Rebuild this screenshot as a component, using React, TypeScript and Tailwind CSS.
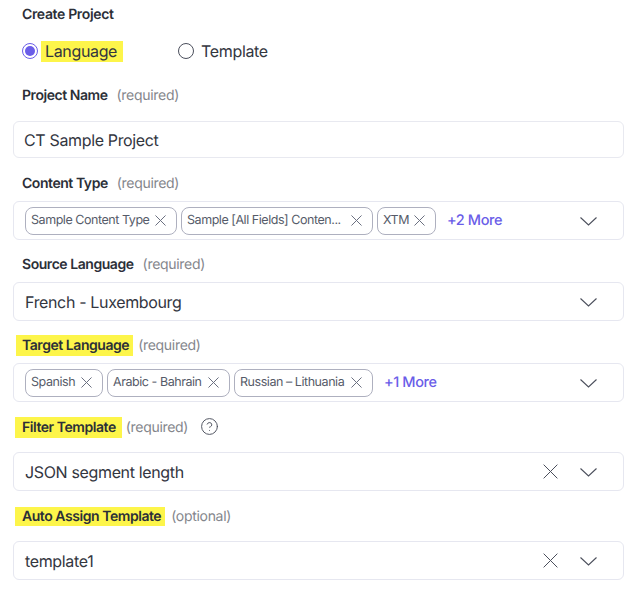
import { CircleHelp } from "lucide-react"

function Label({ name, hint, mark, gap, className }: { name: string; hint: string; mark?: string; gap?: string; className?: string }) {
    return (
        <div className={`flex items-center h-6 pt-[2px] text-[14px] tracking-[-0.45px] ${className || ""}`}>
            <span className={`font-semibold text-[#2b2f38] ${mark || "pl-[9px]"}`}>{name}</span>
            <span className={`text-[#84868c] tracking-[-0.3px] ${gap || "ml-[9px]"}`}>{hint}</span>
        </div>
    )
}

function Cross({ size, className }: { size: number; className: string }) {
    return (
        <svg width={size} height={size} viewBox="0 0 12 12" fill="none" stroke="currentColor" strokeWidth={12 / size} className={className}>
            <path d="M0.5 0.5L11.5 11.5M11.5 0.5L0.5 11.5" />
        </svg>
    )
}

function Chip({ text, width }: { text: string; width: string }) {
    return (
        <div className={`flex items-center justify-between h-7 pl-[5px] pr-[10px] border border-[#aeb0bf] rounded-lg text-[12.5px] tracking-[-0.45px] text-[#565b69] ${width}`}>
            <span className="whitespace-nowrap pt-[1px]">{text}</span>
            <Cross size={11} className="text-[#6b7080] shrink-0" />
        </div>
    )
}

function Chevron() {
    return (
        <svg width="17" height="9" viewBox="0 0 17 9" fill="none" stroke="currentColor" strokeWidth="1.1" className="text-[#4b4f5c] mt-[1px]">
            <path d="M0.5 0.5L8.5 8L16.5 0.5" />
        </svg>
    )
}

function More({ text }: { text: string }) {
    return <span className="ml-[11px] text-[14.5px] font-medium tracking-[-0.4px] text-[#6a5de8]">{text}</span>
}

export default function App() {
    const box = "flex items-center h-[39px] border border-[#e6e7f0] rounded-md"
    const big = "text-[16px] tracking-[-0.35px] text-[#33363f]"

    return (
        <div className="w-[640px] h-[591px] bg-white pl-[13px] overflow-hidden font-['Inter',sans-serif] [text-rendering:geometricPrecision]">
            <div className="w-[611px]">
                <div className="flex items-center h-[26px] pt-[2px] pl-[9px] text-[14px] font-semibold tracking-[-0.35px] text-[#2b2f38]">Create Project</div>

                <div className={`flex items-center h-6 mt-[13px] pl-[9px] ${big}`}>
                    <div className="w-4 h-4 rounded-full border border-[#6a5de8] flex items-center justify-center">
                        <div className="w-[10px] h-[10px] rounded-full bg-[#6a5de8]"></div>
                    </div>
                    <span className="ml-[3px] pl-[4px] pr-[6px] bg-[#fdf54a] leading-[21px]">Language</span>
                    <div className="w-4 h-4 rounded-full border border-[#4b4f5c] ml-[55px]"></div>
                    <span className="ml-[7px]">Template</span>
                </div>

                <Label name="Project Name" hint="(required)" className="mt-[19px]" />
                <div className={`flex items-center h-[37px] mt-[15px] px-[10px] border border-[#e8e9f0] rounded-md ${big}`}>CT Sample Project</div>

                <Label name="Content Type" hint="(required)" className="mt-3" />
                <div className={`${box} mt-[7px] pl-[11px] pr-[26px]`}>
                    <div className="flex items-center gap-1">
                        <Chip text="Sample Content Type" width="w-[152px]" />
                        <Chip text="Sample [All Fields] Conten..." width="w-[192px]" />
                        <Chip text="XTM" width="w-[59px]" />
                    </div>
                    <More text="+2 More" />
                    <div className="ml-auto"><Chevron /></div>
                </div>

                <Label name="Source Language" hint="(required)" className="mt-[11px]" />
                <div className={`${box} justify-between mt-[7px] pl-[11px] pr-[26px] ${big}`}>
                    <span>French - Luxembourg</span>
                    <Chevron />
                </div>

                <Label name="Target Language" hint="(required)" mark="pl-[6px] pr-[4px] ml-[3px] bg-[#fdf54a] leading-[21px]" gap="ml-[5px]" className="mt-[11px]" />
                <div className={`${box} mt-[7px] pl-[11px] pr-[26px]`}>
                    <div className="flex items-center gap-1">
                        <Chip text="Spanish" width="w-[78px]" />
                        <Chip text="Arabic - Bahrain" width="w-[123px]" />
                        <Chip text="Russian – Lithuania" width="w-[139px]" />
                    </div>
                    <More text="+1 More" />
                    <div className="ml-auto"><Chevron /></div>
                </div>

                <div className="flex items-center h-6 mt-3">
                    <Label name="Filter Template" hint="(required)" mark="pl-[7px] pr-[6px] ml-[2px] bg-[#fdf54a] leading-[21px]" gap="ml-1" />
                    <CircleHelp size={19} strokeWidth={1.2} className="ml-3 mt-[1px] text-[#4b4f5c]" />
                </div>
                <div className={`${box} mt-[14px] pl-[11px] pr-[26px] ${big}`}>
                    <span>JSON segment length</span>
                    <div className="ml-auto mr-[22px]"><Cross size={15} className="text-[#4b4f5c]" /></div>
                    <Chevron />
                </div>

                <Label name="Auto Assign Template" hint="(optional)" mark="pl-[7px] pr-[4px] ml-[2px] bg-[#fdf54a] leading-[19px]" gap="ml-[6px]" className="mt-3" />
                <div className={`${box} mt-[14px] pl-[11px] pr-[26px] ${big}`}>
                    <span>template1</span>
                    <div className="ml-auto mr-[22px]"><Cross size={15} className="text-[#4b4f5c]" /></div>
                    <Chevron />
                </div>
            </div>
        </div>
    )
}
